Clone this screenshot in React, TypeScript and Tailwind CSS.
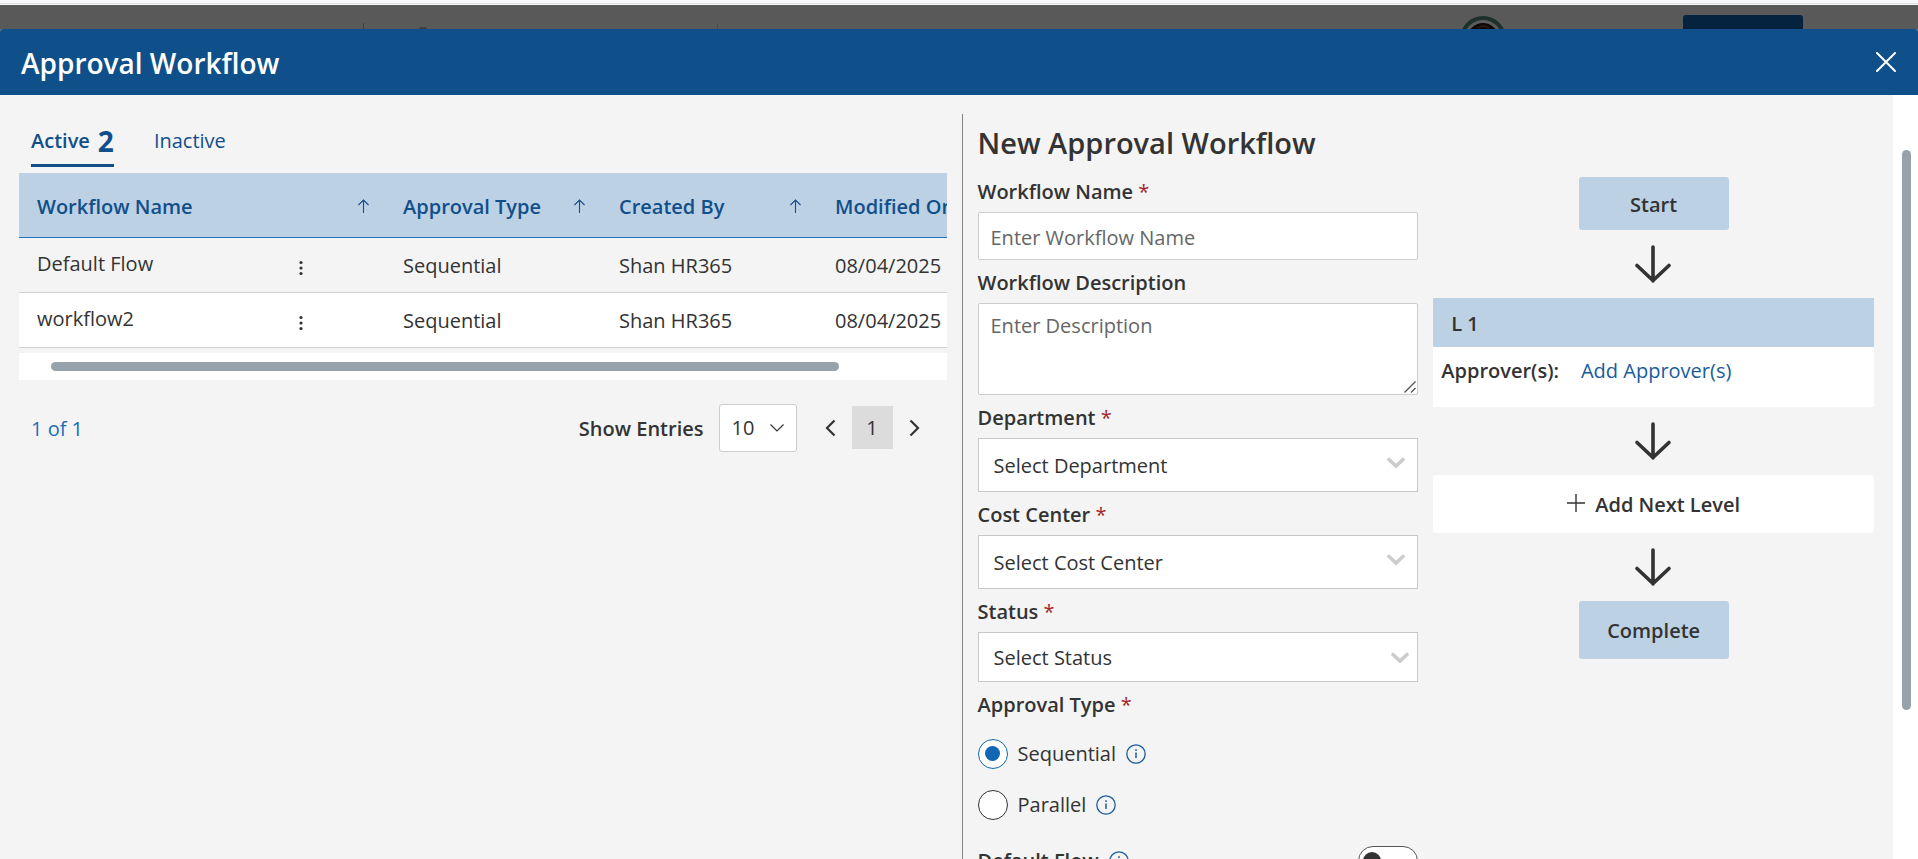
import type { ReactNode } from "react";

const workflows = [
  { name: "Default Flow", type: "Sequential", by: "Shan HR365", modified: "08/04/2025" },
  { name: "workflow2", type: "Sequential", by: "Shan HR365", modified: "08/04/2025" },
];

function SortArrow() {
  return (
    <svg className="size-4 shrink-0" viewBox="0 0 16 16" fill="none" stroke="currentColor" strokeWidth="1.1" aria-hidden="true">
      <path d="M8.500 14V1M3.500 6l5-5 5 5" />
    </svg>
  );
}

function DownArrow() {
  return (
    <svg className="mx-auto my-3.5 block h-10 w-10 text-[#333333]" viewBox="0 0 40 40" fill="none" stroke="currentColor" strokeWidth="3.6" strokeLinecap="round" aria-hidden="true">
      <path d="M19 3v34M3 21.500L19 36.500L35 21.500" />
    </svg>
  );
}

function InfoIcon() {
  return (
    <svg className="size-5 text-[#1d5c9e]" viewBox="0 0 20 20" fill="none" stroke="currentColor" strokeWidth="1.300" aria-hidden="true">
      <circle cx="10" cy="10" r="9.200" />
      <path d="M10 8.500v5.500M10 5.300v1.700" strokeWidth="1.500" />
    </svg>
  );
}

function FieldLabel({ htmlFor, required, children }: { htmlFor: string; required?: boolean; children: ReactNode }) {
  return (
    <label htmlFor={htmlFor} className="block pt-2 pb-[5px] leading-[30px] font-semibold">
      {children}
      {required && <span className="font-normal text-[#a4262c]"> *</span>}
    </label>
  );
}

function SelectField({ id, label, placeholder, compact }: { id: string; label: string; placeholder: string; compact?: boolean }) {
  return (
    <div>
      <FieldLabel htmlFor={id} required>{label}</FieldLabel>
      <div className="relative">
        <select
          id={id}
          className={`block w-full appearance-none border border-[#c8c8c8] bg-white pl-[15px] pr-12 ${compact ? "h-[50px] pt-0.5" : "h-[54px] pt-0.5"}`}
        >
          <option>{placeholder}</option>
        </select>
        <svg
          className={`pointer-events-none absolute h-3 w-5 text-[#cccccc] ${compact ? "right-2 top-5" : "right-3 top-[19px]"}`}
          viewBox="0 0 20 12"
          fill="none"
          stroke="currentColor"
          strokeWidth="3.6"
          strokeLinecap="round"
          aria-hidden="true"
        >
          <path d="M3 2.500l7 6.500 7-6.500" />
        </svg>
      </div>
    </div>
  );
}

function RadioRow({ id, label, checked }: { id: string; label: string; checked?: boolean }) {
  return (
    <div className="flex h-[51px] items-center">
      <span className="relative flex size-[30px] items-center justify-center">
        <input
          id={id}
          type="radio"
          name="approvalType"
          defaultChecked={checked}
          className="peer absolute size-[30px] appearance-none rounded-full border border-[#333333] bg-white checked:border-[#1267b4]"
        />
        <span className="relative hidden size-[15px] rounded-full bg-[#1267b4] peer-checked:block" />
      </span>
      <label htmlFor={id} className="mr-2.5 ml-2.5">{label}</label>
      <InfoIcon />
    </div>
  );
}

function WorkflowTable() {
  return (
    <div className="mt-1.5 overflow-hidden">
      <table className="w-[1100px] table-fixed border-collapse text-left">
        <colgroup>
          <col className="w-[366px]" />
          <col className="w-[216px]" />
          <col className="w-[216px]" />
          <col />
        </colgroup>
        <thead>
          <tr className="h-16 border-b border-[#2074bf] bg-[#bdd1e5] text-[#104f8a]">
            {["Workflow Name", "Approval Type", "Created By", "Modified On"].map((title) => (
              <th key={title} className="pt-1 pr-3.5 pl-[18px] font-semibold whitespace-nowrap">
                <span className="flex items-center justify-between">
                  {title}
                  <SortArrow />
                </span>
              </th>
            ))}
          </tr>
        </thead>
        <tbody>
          {workflows.map((w) => (
            <tr key={w.name} className="h-[55px] border-b border-[#d5cfd1] even:bg-white">
              <td className="pr-[78px] pb-0.5 pl-[18px]">
                <span className="flex items-center justify-between">
                  {w.name}
                  <button type="button" aria-label="More actions" className="mt-2 px-1">
                    <svg className="h-4 w-1" viewBox="0 0 4 16" fill="currentColor" aria-hidden="true">
                      <circle cx="2" cy="2.500" r="1.600" />
                      <circle cx="2" cy="8" r="1.600" />
                      <circle cx="2" cy="13.500" r="1.600" />
                    </svg>
                  </button>
                </span>
              </td>
              <td className="pt-0.5 pl-[18px]">{w.type}</td>
              <td className="pt-0.5 pl-[18px]">{w.by}</td>
              <td className="pt-0.5 pl-[18px]">{w.modified}</td>
            </tr>
          ))}
        </tbody>
      </table>
      <div className="mt-[5px] bg-white py-[9px] pr-[108px] pl-8">
        <div className="h-[9px] rounded-full bg-[#98a2ab]" />
      </div>
    </div>
  );
}

function WorkflowList() {
  return (
    <section className="min-w-0">
      <div role="tablist" className="flex gap-10 pt-2.5 pl-3 text-[#104f8a]">
        <button type="button" role="tab" aria-selected="true" className="flex h-[43px] items-center gap-2 border-b-3 border-[#104f8a] pb-1.5 font-semibold">
          Active <span className="text-[28px] leading-8 font-bold">2</span>
        </button>
        <button type="button" role="tab" aria-selected="false" className="flex h-[43px] items-center border-b-3 border-transparent pb-1.5">
          Inactive
        </button>
      </div>
      <WorkflowTable />
      <div className="mt-6 flex items-center pr-[26px] pl-3">
        <span className="mr-auto pt-0.5 text-[#1b6dbb]">1 of 1</span>
        <label htmlFor="entries" className="mr-[15px] pt-0.5 font-semibold">Show Entries</label>
        <div className="relative">
          <select id="entries" className="block h-12 w-[78px] appearance-none rounded-[3px] border border-[#cccccc] bg-white pl-3">
            <option>10</option>
          </select>
          <svg className="pointer-events-none absolute top-[19px] right-3 h-2.5 w-4" viewBox="0 0 16 10" fill="none" stroke="currentColor" strokeWidth="1.200" aria-hidden="true">
            <path d="M1.500 1.500L8 8l6.500-6.500" />
          </svg>
        </div>
        <nav aria-label="Pages" className="ml-[27px] flex items-center gap-4">
          <button type="button" aria-label="Previous page">
            <svg className="h-5 w-3" viewBox="0 0 12 20" fill="none" stroke="currentColor" strokeWidth="2.200" aria-hidden="true">
              <path d="M10.500 2.500L3 10l7.500 7.500" />
            </svg>
          </button>
          <button type="button" aria-current="page" className="h-[43px] w-[41px] bg-[#dcdcdc]">1</button>
          <button type="button" aria-label="Next page">
            <svg className="h-5 w-3" viewBox="0 0 12 20" fill="none" stroke="currentColor" strokeWidth="2.200" aria-hidden="true">
              <path d="M1.500 2.500L9 10l-7.500 7.500" />
            </svg>
          </button>
        </nav>
      </div>
    </section>
  );
}

function WorkflowForm() {
  return (
    <form>
      <h2 className="h-[55px] pt-2 text-[29px] leading-[42px] font-semibold">New Approval Workflow</h2>
      <FieldLabel htmlFor="name" required>Workflow Name</FieldLabel>
      <input id="name" type="text" placeholder="Enter Workflow Name" className="block h-12 w-full rounded-xs border border-[#cccccc] bg-white px-3 pt-0.5 placeholder:text-[#666666]" />
      <FieldLabel htmlFor="description">Workflow Description</FieldLabel>
      <div className="relative">
        <textarea id="description" placeholder="Enter Description" className="block h-[92px] w-full rounded-xs border border-[#cccccc] bg-white px-3 py-2 placeholder:text-[#666666]" />
        <svg className="pointer-events-none absolute right-0.5 bottom-0.5 size-3 bg-white" viewBox="0 0 12 12" fill="none" stroke="#555555" strokeWidth="1.400" aria-hidden="true">
          <path d="M0.500 11.500l11-11M7 11.500l4.500-4.500" />
        </svg>
      </div>
      <SelectField id="department" label="Department" placeholder="Select Department" />
      <SelectField id="costCenter" label="Cost Center" placeholder="Select Cost Center" />
      <SelectField id="status" label="Status" placeholder="Select Status" compact />
      <fieldset>
        <legend className="pt-2 leading-[30px] font-semibold">
          Approval Type<span className="font-normal text-[#a4262c]"> *</span>
        </legend>
        <div className="pt-2">
          <RadioRow id="sequential" label="Sequential" checked />
          <RadioRow id="parallel" label="Parallel" />
        </div>
      </fieldset>
      <div className="flex items-center justify-between pt-4">
        <label htmlFor="defaultFlow" className="flex items-center gap-2.5 font-semibold">
          Default Flow <InfoIcon />
        </label>
        <span className="relative flex h-[30px] w-[60px] items-center">
          <input id="defaultFlow" type="checkbox" role="switch" className="absolute h-[30px] w-[60px] appearance-none rounded-full border border-[#555555] bg-white" />
          <span className="pointer-events-none relative ml-[5px] size-[18px] rounded-full bg-[#333333]" />
        </span>
      </div>
    </form>
  );
}

function ApprovalFlow() {
  return (
    <section className="pt-[63px]">
      <div className="mx-auto flex h-[53px] w-[150px] items-center justify-center rounded-[3px] bg-[#bdd1e5] pt-0.5 font-semibold">Start</div>
      <DownArrow />
      <div className="bg-white">
        <div className="flex h-[49px] items-center bg-[#bdd1e5] pt-0.5 pl-[18px] font-semibold">L 1</div>
        <div className="flex h-[60px] gap-[22px] px-2 pt-2.5">
          <span className="font-semibold">Approver(s):</span>
          <a href="#add-approvers" className="text-[#185c9c]">Add Approver(s)</a>
        </div>
      </div>
      <DownArrow />
      <button type="button" className="flex h-[58px] w-full items-center justify-center gap-2.5 rounded-[3px] bg-white pt-0.5 font-semibold">
        <svg className="mb-1 size-[18px]" viewBox="0 0 18 18" fill="none" stroke="currentColor" strokeWidth="1.400" aria-hidden="true">
          <path d="M9 0v18M0 9h18" />
        </svg>
        Add Next Level
      </button>
      <DownArrow />
      <div className="mx-auto flex h-[58px] w-[150px] items-center justify-center rounded-[3px] bg-[#bdd1e5] pt-0.5 font-semibold">Complete</div>
    </section>
  );
}

export default function App() {
  return (
    <div className="flex h-screen flex-col overflow-hidden bg-[#595959] font-['Open_Sans','Noto_Sans',sans-serif] text-[20px] leading-7 text-[#333333]">
      <div className="h-[5px] shrink-0 border-b border-[#f8f8fb] bg-[#f8f8ff] pt-[3px]">
        <div className="h-px bg-[#dedee6]" />
      </div>
      <div className="flex h-6 shrink-0 items-end overflow-hidden">
        <span className="ml-[363px] h-1.5 w-px bg-[#404040]" />
        <span className="ml-[55px] h-0.5 w-2 rounded-t-full bg-[#404040]" />
        <span className="ml-[290px] h-1.5 w-px bg-[#4b4b4b]" />
        <svg className="ml-auto h-[13px] w-[46px]" viewBox="0 0 46 13" aria-hidden="true">
          <circle cx="23" cy="23" r="21" fill="#5b5b5b" stroke="#1d302c" strokeWidth="4" />
          <circle cx="23" cy="23" r="16" fill="#0d0907" />
          <path d="M18 12q5-4 11 0" stroke="#2b1713" strokeWidth="2" fill="none" />
        </svg>
        <span className="mr-[115px] ml-[177px] h-3.5 w-[120px] rounded-t-[3px] bg-[#05233e]" />
      </div>
      <main className="flex min-h-0 flex-1 flex-col overflow-hidden rounded-t-[3px] bg-white">
        <header className="flex h-[66px] shrink-0 items-center justify-between bg-[#0f4f8a] pr-[22px] pl-[21px] text-white">
          <h1 className="pt-0.5 text-[28px] leading-9 font-semibold">Approval Workflow</h1>
          <button type="button" aria-label="Close">
            <svg className="size-5" viewBox="0 0 20 20" fill="none" stroke="currentColor" strokeWidth="2" strokeLinecap="round" aria-hidden="true">
              <path d="M1 1l18 18M19 1L1 19" />
            </svg>
          </button>
        </header>
        <div className="flex min-h-0 flex-1">
          <div className="grid min-w-0 flex-1 grid-cols-2 overflow-hidden bg-[#f4f4f4] px-[19px] pt-[19px]">
            <WorkflowList />
            <div className="ml-[15px] grid grid-cols-2 items-start gap-[15px] border-l border-[#808488] pl-[15px]">
              <WorkflowForm />
              <ApprovalFlow />
            </div>
          </div>
          <div className="w-[25px] bg-white px-2 pt-[55px]">
            <div className="ml-px h-[560px] w-[9px] rounded-full bg-[#98a2ab]" />
          </div>
        </div>
      </main>
    </div>
  );
}
